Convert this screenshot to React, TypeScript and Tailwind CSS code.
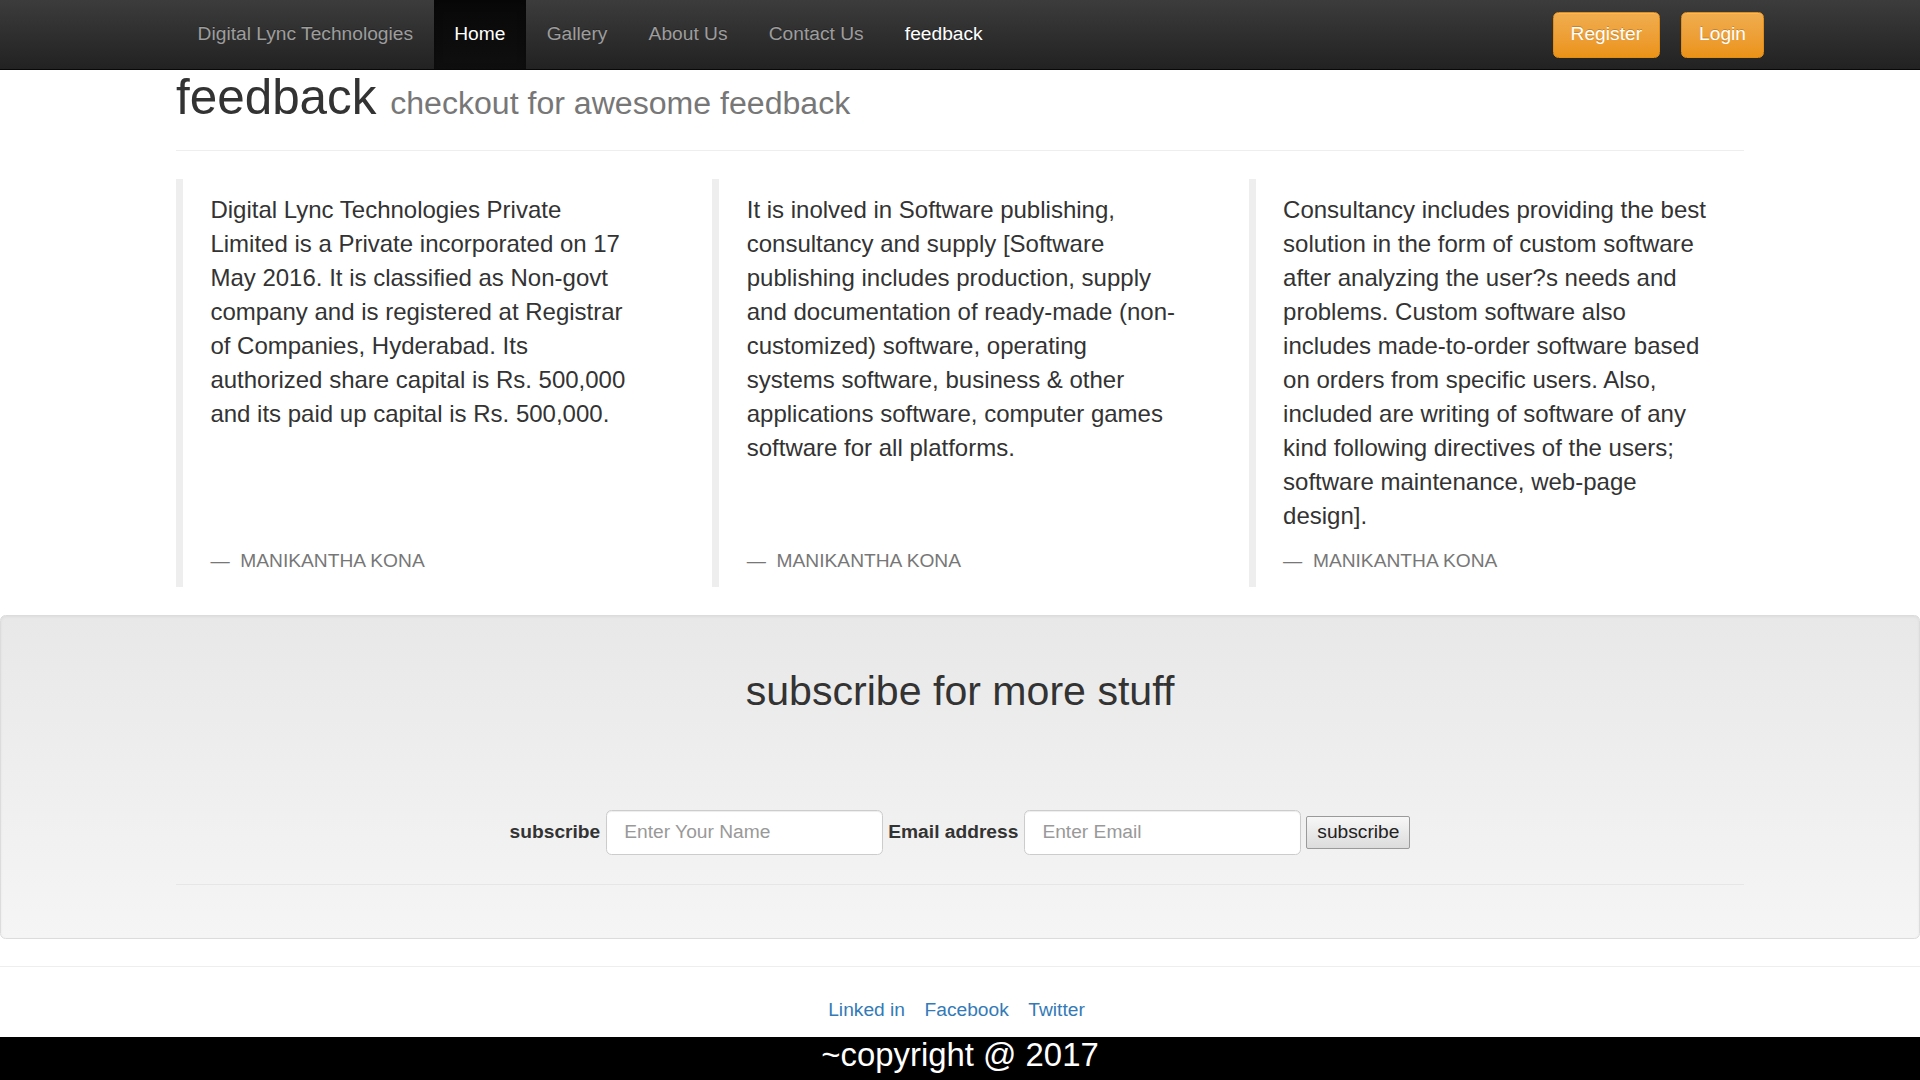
import React from "react";

const quotes = [
  "Digital Lync Technologies Private Limited is a Private incorporated on 17 May 2016. It is classified as Non-govt company and is registered at Registrar of Companies, Hyderabad. Its authorized share capital is Rs. 500,000 and its paid up capital is Rs. 500,000.",
  "It is inolved in Software publishing, consultancy and supply [Software publishing includes production, supply and documentation of ready-made (non-customized) software, operating systems software, business & other applications software, computer games software for all platforms.",
  "Consultancy includes providing the best solution in the form of custom software after analyzing the user?s needs and problems. Custom software also includes made-to-order software based on orders from specific users. Also, included are writing of software of any kind following directives of the users; software maintenance, web-page design].",
];

const navLinks = [
  { label: "Digital Lync Technologies", cls: "text-[#9d9d9d]" },
  {
    label: "Home",
    cls: "text-white bg-linear-to-b from-[#080808] to-[#0f0f0f] shadow-[inset_0_3px_9px_rgba(0,0,0,0.25)]",
  },
  { label: "Gallery", cls: "text-[#9d9d9d]" },
  { label: "About Us", cls: "text-[#9d9d9d]" },
  { label: "Contact Us", cls: "text-[#9d9d9d]" },
  { label: "feedback", cls: "text-white" },
];

const App = () => {
  return (
    <div className="h-[1080px] overflow-hidden bg-white font-['Liberation_Sans',Arial,sans-serif] text-[#333]">
      {/* navbar */}
      <nav className="h-[70px] border-b border-[#080808] bg-linear-to-b from-[#3c3c3c] to-[#222]">
        <div className="mx-auto flex w-[1568px] items-center justify-between">
          <div className="ml-[1px] flex h-[69px]">
            {navLinks.map((l) => (
              <a
                key={l.label}
                href="#"
                className={`flex h-[69px] items-center px-[20.6px] text-[19.2px] [text-shadow:0_-1px_0_rgba(0,0,0,0.25)] ${l.cls}`}
              >
                {l.label}
              </a>
            ))}
          </div>
          <div className="mr-[-20px] flex gap-[21px]">
            <button className="h-[46px] rounded-[5.5px] border border-[#e38d13] bg-linear-to-b from-[#f0ad4e] to-[#eb9316] px-[17px] text-[19.2px] text-white shadow-[inset_0_1px_0_rgba(255,255,255,0.15)] [text-shadow:0_-1px_0_rgba(0,0,0,0.2)]">
              Register
            </button>
            <button className="h-[46px] rounded-[5.5px] border border-[#e38d13] bg-linear-to-b from-[#f0ad4e] to-[#eb9316] px-[17px] text-[19.2px] text-white shadow-[inset_0_1px_0_rgba(255,255,255,0.15)] [text-shadow:0_-1px_0_rgba(0,0,0,0.2)]">
              Login
            </button>
          </div>
        </div>
      </nav>

      {/* page header + quotes */}
      <div className="mx-auto w-[1568px]">
        <div className="mb-[27.4px] border-b border-[#eee] pb-[12.3px]">
          <h1 className="mb-[13.7px] text-[49.4px] leading-[1.1]">
            feedback <small className="text-[32.1px] text-[#777]">checkout for awesome feedback</small>
          </h1>
        </div>

        <div className="mb-[27.4px] grid grid-cols-3 gap-x-[41px]">
          {quotes.map((q, i) => (
            <blockquote
              key={i}
              className="flex flex-col border-l-[7px] border-[#eee] px-[27.4px] pb-[12.7px] pt-[14.7px]"
            >
              <p className="mb-[13.7px] flex-1 text-[24px] leading-[34px]">{q}</p>
              <footer className="text-[19.2px] leading-[27.4px] text-[#777]">
                &mdash;&nbsp; MANIKANTHA KONA
              </footer>
            </blockquote>
          ))}
        </div>
      </div>

      {/* subscribe well */}
      <div className="mb-[27.4px] rounded-[5.5px] border border-[#dcdcdc] bg-linear-to-b from-[#e8e8e8] to-[#f5f5f5] p-[26px] shadow-[inset_0_1px_3px_rgba(0,0,0,0.05)]">
        <div className="mx-auto w-[1568px]">
          <h2 className="mt-[27.4px] text-center text-[41.1px] leading-[1.1]">subscribe for more stuff</h2>
          <form className="mt-[95px] flex h-[46px] items-center justify-center">
            <label className="mr-[6px] text-[19.2px] font-bold">subscribe</label>
            <input
              type="text"
              placeholder="Enter Your Name"
              className="mr-[5px] h-[45px] w-[277px] rounded-[5.5px] border border-[#ccc] bg-white px-[17px] text-[19.2px] shadow-[inset_0_1px_1px_rgba(0,0,0,0.075)] placeholder:text-[#999]"
            />
            <label className="mr-[6px] text-[19.2px] font-bold">Email address</label>
            <input
              type="email"
              placeholder="Enter Email"
              className="mr-[5px] h-[45px] w-[277px] rounded-[5.5px] border border-[#ccc] bg-white px-[17px] text-[19.2px] shadow-[inset_0_1px_1px_rgba(0,0,0,0.075)] placeholder:text-[#999]"
            />
            <button
              type="button"
              className="h-[33px] w-[104px] rounded-[2px] border border-[#9a9a9a] bg-linear-to-b from-[#f7f7f7] to-[#dcdcdc] text-[19.2px] text-[#222]"
            >
              subscribe
            </button>
          </form>
          <hr className="mb-[27.4px] mt-[28.4px] border-[#e6e6e6]" />
        </div>
      </div>

      <hr className="border-[#eee]" />

      {/* footer */}
      <div className="mb-[13.7px] mt-[28.4px] flex justify-center gap-[19.5px] pr-[7px] text-[19.2px] leading-[27.4px] text-[#337ab7]">
        <a href="#">Linked in</a>
        <a href="#">Facebook</a>
        <a href="#">Twitter</a>
      </div>
      <div className="h-[44px] overflow-hidden bg-black text-center text-[32.9px] leading-[36.2px] text-white">
        ~copyright @ 2017
      </div>
    </div>
  );
};

export default App;
